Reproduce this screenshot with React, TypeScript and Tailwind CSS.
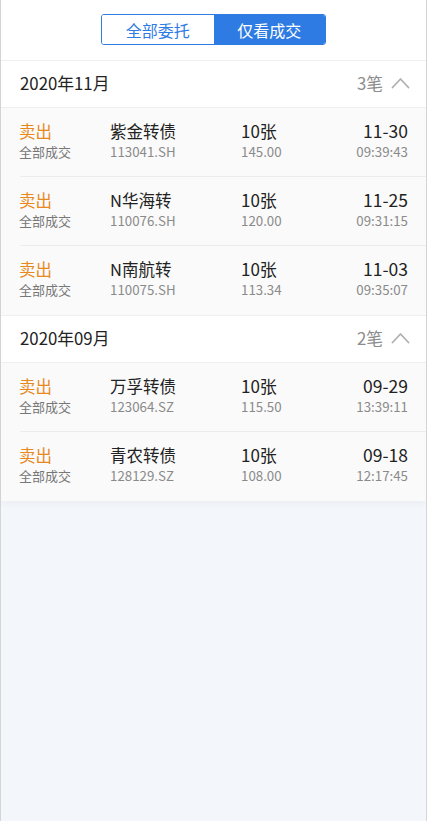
type Trade = {
  side: string
  status: string
  name: string
  code: string
  qty: string
  price: string
  date: string
  time: string
}

const GROUPS: { month: string; count: string; trades: Trade[] }[] = [
  {
    month: '2020年11月',
    count: '3笔',
    trades: [
      { side: '卖出', status: '全部成交', name: '紫金转债', code: '113041.SH', qty: '10张', price: '145.00', date: '11-30', time: '09:39:43' },
      { side: '卖出', status: '全部成交', name: 'N华海转', code: '110076.SH', qty: '10张', price: '120.00', date: '11-25', time: '09:31:15' },
      { side: '卖出', status: '全部成交', name: 'N南航转', code: '110075.SH', qty: '10张', price: '113.34', date: '11-03', time: '09:35:07' },
    ],
  },
  {
    month: '2020年09月',
    count: '2笔',
    trades: [
      { side: '卖出', status: '全部成交', name: '万孚转债', code: '123064.SZ', qty: '10张', price: '115.50', date: '09-29', time: '13:39:11' },
      { side: '卖出', status: '全部成交', name: '青农转债', code: '128129.SZ', qty: '10张', price: '108.00', date: '09-18', time: '12:17:45' },
    ],
  },
]

const TradeRow = ({ t, last }: { t: Trade; last: boolean }) => (
  <div className="relative flex h-[69px] items-start bg-[#fafafa] px-[18px] pt-[12px]">
    <div className="flex w-[91px] flex-col">
      <span className="text-[16.5px] leading-[22px] text-[#e8891e]">{t.side}</span>
      <span className="text-[13px] leading-[19px] text-[#777]">{t.status}</span>
    </div>
    <div className="flex w-[131px] flex-col">
      <span className="text-[16.5px] leading-[22px] text-[#222]">{t.name}</span>
      <span className="text-[13.3px] leading-[19px] text-[#8a8a8a]">{t.code}</span>
    </div>
    <div className="flex flex-1 flex-col">
      <span className="text-[17px] leading-[22px] text-[#222]">{t.qty}</span>
      <span className="text-[13.3px] leading-[19px] text-[#8a8a8a]">{t.price}</span>
    </div>
    <div className="flex flex-col items-end">
      <span className="text-[17.5px] leading-[22px] text-[#222]">{t.date}</span>
      <span className="text-[13.3px] leading-[19px] text-[#8a8a8a]">{t.time}</span>
    </div>
    {!last && (
      <div className="absolute right-0 bottom-0 left-[19px] h-px bg-[#ececec]" />
    )}
  </div>
)

export default function App() {
  return (
    <div
      className="flex min-h-[821px] flex-col border-x border-[#d6d6d6] bg-[#f3f6fa]"
      style={{ fontFamily: '"Noto Sans CJK SC", "Noto Sans", sans-serif' }}
    >
      <div className="shadow-[0_3px_6px_rgba(0,0,0,0.035)]">
        {/* segmented control */}
        <div className="flex h-[60px] items-start justify-center bg-white pt-[14px]">
          <div className="flex h-[31px] w-[225px] overflow-hidden rounded-[3px] border border-[#2e7be3]">
            <button className="flex flex-1 items-center justify-center bg-white text-[16px] text-[#2e7be3]">
              全部委托
            </button>
            <button className="flex flex-1 items-center justify-center bg-[#2e7be3] text-[16px] text-white">
              仅看成交
            </button>
          </div>
        </div>

        {GROUPS.map((g) => (
          <section key={g.month}>
            <header className="flex h-[48px] items-center justify-between border-y border-[#efefef] bg-white pr-[16px] pl-[19px]">
              <span className="text-[16.8px] text-[#222]">{g.month}</span>
              <div className="flex items-center gap-[8px]">
                <span className="text-[16.8px] text-[#8c8c8c]">{g.count}</span>
                <svg width="19" height="12" viewBox="0 0 19 12" className="mb-[2px]">
                  <polyline
                    points="1.5,10.5 9.5,2 17.5,10.5"
                    fill="none"
                    stroke="#b0b0b0"
                    strokeWidth="1.8"
                    strokeLinecap="round"
                    strokeLinejoin="round"
                  />
                </svg>
              </div>
            </header>
            {g.trades.map((t, i) => (
              <TradeRow key={t.code} t={t} last={i === g.trades.length - 1} />
            ))}
          </section>
        ))}
      </div>
    </div>
  )
}
